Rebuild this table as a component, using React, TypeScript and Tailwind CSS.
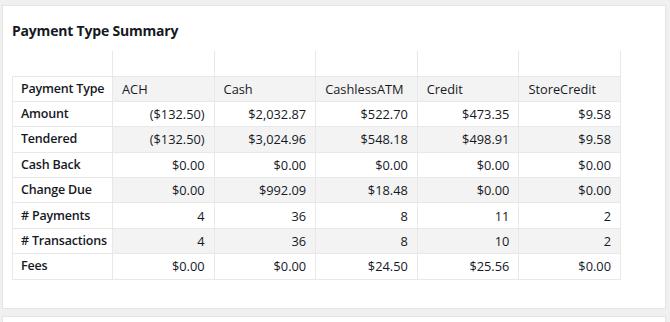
const columns = ["ACH", "Cash", "CashlessATM", "Credit", "StoreCredit"];

const rows: { label: string; values: string[] }[] = [
  { label: "Amount", values: ["($132.50)", "$2,032.87", "$522.70", "$473.35", "$9.58"] },
  { label: "Tendered", values: ["($132.50)", "$3,024.96", "$548.18", "$498.91", "$9.58"] },
  { label: "Cash Back", values: ["$0.00", "$0.00", "$0.00", "$0.00", "$0.00"] },
  { label: "Change Due", values: ["$0.00", "$992.09", "$18.48", "$0.00", "$0.00"] },
  { label: "# Payments", values: ["4", "36", "8", "11", "2"] },
  { label: "# Transactions", values: ["4", "36", "8", "10", "2"] },
  { label: "Fees", values: ["$0.00", "$0.00", "$24.50", "$25.56", "$0.00"] },
];

export default function App() {
  return (
    <div
      className="w-[670px] h-[322px] overflow-hidden bg-[#f0f0f0] pt-[5px] pl-[2px] text-[#16191f]"
      style={{ fontFamily: '"Open Sans", "Liberation Sans", sans-serif' }}
    >
      <div className="w-[664px] h-[304px] bg-white border border-[#e4e4e4] pl-[9px] pt-[15px]">
        <h2 className="text-[14px] font-bold leading-5 tracking-[-0.2px]">Payment Type Summary</h2>

        <table className="mt-[10px] w-[609px] table-fixed border-collapse text-[12.8px] leading-4">
          <colgroup>
            <col className="w-[100px]" />
            {columns.map((c) => (
              <col key={c} />
            ))}
          </colgroup>
          <thead>
            <tr className="h-[25px]">
              <th className="p-0" />
              {columns.map((c) => (
                <th key={c} className="p-0 border-l border-r border-[#e8e8e8]" />
              ))}
            </tr>
            <tr className="h-[25.4px]">
              <th className="border border-[#e8e8e8] bg-white px-2 text-left text-[12.5px] font-semibold tracking-[-0.2px] whitespace-nowrap">
                Payment Type
              </th>
              {columns.map((c) => (
                <th
                  key={c}
                  className="border border-[#e8e8e8] bg-[#f3f3f3] px-[9px] text-left font-normal whitespace-nowrap"
                >
                  {c}
                </th>
              ))}
            </tr>
          </thead>
          <tbody>
            {rows.map((r, i) => (
              <tr key={r.label} className="h-[25.4px]">
                <td className="border border-[#e8e8e8] bg-white px-2 text-[12.5px] font-semibold tracking-[-0.2px] whitespace-nowrap">
                  {r.label}
                </td>
                {r.values.map((v, j) => (
                  <td
                    key={j}
                    className={`border border-[#e8e8e8] px-[9px] text-right whitespace-nowrap ${i % 2 === 1 ? "bg-[#f3f3f3]" : "bg-white"}`}
                  >
                    {v}
                  </td>
                ))}
              </tr>
            ))}
          </tbody>
        </table>
      </div>
      <div className="mt-[7px] w-[664px] h-[20px] bg-white border border-[#e4e4e4]" />
    </div>
  );
}
